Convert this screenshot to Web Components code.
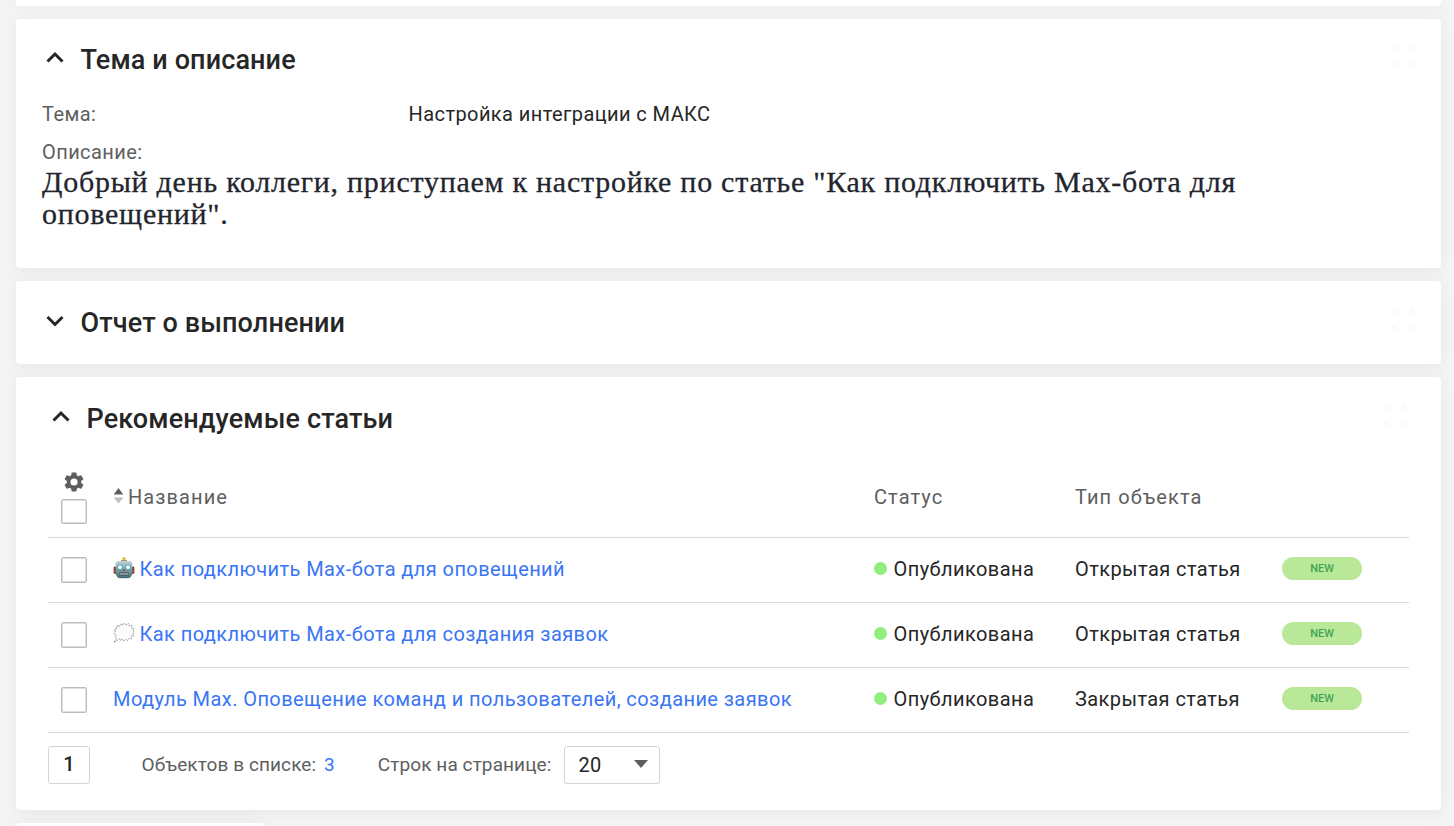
<!DOCTYPE html>
<html lang="ru">
<head>
<meta charset="UTF-8">
<title>Рекомендуемые статьи</title>
<style>
    * { box-sizing: border-box; }
    html { height: 100%; overflow: hidden; }
    body {
        margin: 0;
        height: 826px;
        overflow: hidden;
        background: #f4f4f4;
        border-right: 1px solid #f8f8f8;
        color: #262626;
        font-family: Roboto, "Liberation Sans", sans-serif;
        font-size: 20px;
    }
    main {
        display: flex;
        flex-direction: column;
        gap: 13px;
        height: 826px;
        overflow: hidden;
        padding: 0 12px 0 16px;
    }
    .stub-top { height: 6px; border-radius: 0 0 4px 4px; }
    .stub-bottom { width: 249px; height: 40px; }
</style>
</head>
<body>
<main>
    <content-card class="stub-top"></content-card>

    <content-card style="height: 249px">
        <section-header open heading="Тема и описание"></section-header>
        <field-row label="Тема:">Настройка интеграции с МАКС</field-row>
        <text-field label="Описание:">Добрый день коллеги, приступаем к настройке по статье "Как подключить Max-бота для<br>оповещений".</text-field>
    </content-card>

    <content-card style="height: 83px">
        <section-header heading="Отчет о выполнении"></section-header>
    </content-card>

    <content-card style="height: 433px">
        <section-header open inset heading="Рекомендуемые статьи"></section-header>
        <article-table>
            <article-row icon="robot" name="Как подключить Max-бота для оповещений" status="Опубликована" type="Открытая статья"></article-row>
            <article-row icon="bubble" name="Как подключить Max-бота для создания заявок" status="Опубликована" type="Открытая статья"></article-row>
            <article-row name="Модуль Max. Оповещение команд и пользователей, создание заявок" status="Опубликована" type="Закрытая статья"></article-row>
        </article-table>
        <list-pager page="1" total="3" size="20"></list-pager>
    </content-card>

    <content-card class="stub-bottom"></content-card>
</main>

<script>
const icons = {
    robot: `
        <svg width="22" height="22" viewBox="0 0 22 22">
            <defs>
                <linearGradient id="face" x1="0" y1="0" x2="0" y2="1">
                    <stop offset="0" stop-color="#c3d3d6"/>
                    <stop offset=".5" stop-color="#7d9fa5"/>
                    <stop offset="1" stop-color="#3f6a72"/>
                </linearGradient>
            </defs>
            <rect x=".6" y="9.5" width="3.4" height="7.5" rx="1.4" fill="#8f4640"/>
            <rect x="18" y="9.5" width="3.4" height="7.5" rx="1.4" fill="#8f4640"/>
            <path d="M8.2 3h5.6v2H8.2z" fill="#8a7d86"/>
            <circle cx="11" cy="1.9" r="1.8" fill="#efb43f"/>
            <path d="M2.8 7Q2.8 4 5.8 4h10.4q3 0 3 3v8.5q0 5.8-5 5.8H7.8q-5 0-5-5.8z" fill="url(#face)"/>
            <circle cx="7" cy="10.2" r="2.8" fill="#4aa9bd"/>
            <circle cx="15" cy="10.2" r="2.8" fill="#4aa9bd"/>
            <circle cx="7" cy="10.2" r="1.9" fill="#f0ffff"/>
            <circle cx="15" cy="10.2" r="1.9" fill="#f0ffff"/>
            <path d="M11 11.4l1.4 2.6H9.6z" fill="#c8372e"/>
            <rect x="6.6" y="15.6" width="8.8" height="2.8" rx="1" fill="#3b4d50"/>
            <path d="M7.4 17h7.4" stroke="#d5e0e0" stroke-width="1.3" stroke-dasharray="1.3 .7"/>
        </svg>`,
    bubble: `
        <svg width="22" height="22" viewBox="0 0 22 22">
            <path d="M5.2 3.6l1.9.6L8.3 1.6l1.8 1.6L11.6 1l1.5 1.9 2.4-1.4.5 2.3 2.8-.5-.3 2.4 2.5.8-1.3 2 1.8 1.7-1.9 1.5 1.2 2.2-2.5.4.2 2.5-2.6-.4-1 2.2-2-1.3-1.9 1.8-1.5-1.9-2.3 1.1-.6-1.5-2.1 1.4L.8 20.6l2.9-4.4-1.8-1.6 1.3-1.7-2.4-1.2 1.8-1.7L1.1 8l2.4-.7L3 4.9z" fill="#fcfcfc" stroke="#8e8e8e" stroke-width=".9" stroke-dasharray="1.9 .9"/>
        </svg>`,
    gear: `
        <svg width="24" height="24" viewBox="0 0 24 24">
            <path fill="#5e5e5e" d="M19.14 12.94c.04-.3.06-.61.06-.94 0-.32-.02-.64-.07-.94l2.03-1.58a.49.49 0 0 0 .12-.61l-1.92-3.32a.488.488 0 0 0-.59-.22l-2.39.96c-.5-.38-1.03-.7-1.62-.94l-.36-2.54a.484.484 0 0 0-.48-.41h-3.84c-.24 0-.43.17-.47.41l-.36 2.54c-.59.24-1.13.57-1.62.94l-2.39-.96c-.22-.08-.47 0-.59.22L2.74 8.87c-.12.21-.08.47.12.61l2.03 1.58c-.05.3-.09.63-.09.94s.02.64.07.94l-2.03 1.58a.49.49 0 0 0-.12.61l1.92 3.32c.12.22.37.29.59.22l2.39-.96c.5.38 1.03.7 1.62.94l.36 2.54c.05.24.24.41.48.41h3.84c.24 0 .44-.17.47-.41l.36-2.54c.59-.24 1.13-.56 1.62-.94l2.39.96c.22.08.47 0 .59-.22l1.92-3.32c.12-.22.07-.47-.12-.61zM12 15.6A3.6 3.6 0 1 1 12 8.4a3.6 3.6 0 0 1 0 7.2z"/>
        </svg>`
};

// columns shared by the table head and its rows
const columns = `
    display: grid;
    grid-template-columns: 65px 761px 201px 206px 1fr;
    align-items: center;
`;

class ContentCard extends HTMLElement {
    constructor() {
        super();
        this.attachShadow({ mode: 'open' });
        this.shadowRoot.innerHTML = `
            <style>
                :host {
                    display: block;
                    box-sizing: border-box;
                    flex: none;
                    background: #fff;
                    border-radius: 4px;
                    box-shadow: 0 3px 16px rgba(0,0,0,0.06);
                }
            </style>
            <slot></slot>
        `;
    }
}

class SectionHeader extends HTMLElement {
    constructor() {
        super();
        this.attachShadow({ mode: 'open' });
    }

    connectedCallback() {
        const chevron = this.hasAttribute('open') ? 'M1.5 10.5 9 3l7.5 7.5' : 'M1.5 3 9 10.5 16.5 3';
        this.shadowRoot.innerHTML = `
            <style>
                :host {
                    display: flex;
                    align-items: center;
                    height: 82px;
                    padding: 0 26px 0 30px;
                }
                :host(:not([open])) { height: 84px; }
                :host([inset]) { padding: 0 34px 0 36px; height: 84px; }
                h2 {
                    flex: 1;
                    margin: 0 0 0 16.5px;
                    font-size: 27px;
                    font-weight: 500;
                    line-height: 32px;
                    letter-spacing: 0.12px;
                    white-space: nowrap;
                }
                .chevron { margin-bottom: 4px; }
                .expand { margin-bottom: 8px; }
            </style>
            <svg class="chevron" width="18" height="14" viewBox="0 0 18 14" fill="none" stroke="#262626" stroke-width="3">
                <path d="${chevron}"/>
            </svg>
            <h2>${this.getAttribute('heading')}</h2>
            <svg class="expand" width="24" height="24" viewBox="0 0 24 24" fill="none" stroke="#fbfbfb" stroke-width="2.4">
                <path d="M2 8V2h6M2 2l7 7M16 2h6v6M22 2l-7 7M2 16v6h6M2 22l7-7M22 16v6h-6M22 22l-7-7"/>
            </svg>
        `;
    }
}

class FieldRow extends HTMLElement {
    constructor() {
        super();
        this.attachShadow({ mode: 'open' });
    }

    connectedCallback() {
        this.shadowRoot.innerHTML = `
            <style>
                :host {
                    display: grid;
                    grid-template-columns: 366.5px 1fr;
                    padding: 0 26px;
                    height: 38px;
                    line-height: 26px;
                    letter-spacing: 0.42px;
                }
                .label { color: #5e5e5e; }
            </style>
            <span class="label">${this.getAttribute('label')}</span>
            <span><slot></slot></span>
        `;
    }
}

class TextField extends HTMLElement {
    constructor() {
        super();
        this.attachShadow({ mode: 'open' });
    }

    connectedCallback() {
        this.shadowRoot.innerHTML = `
            <style>
                :host { display: block; padding: 0 26px; white-space: nowrap; }
                .label { color: #5e5e5e; line-height: 26px; letter-spacing: 0.42px; }
                .text {
                    margin-top: 1px;
                    color: #22252e;
                    font: 30px/32px Georgia, "Liberation Serif", serif;
                    letter-spacing: 0.74px;
                    -webkit-text-stroke: 0.3px #22252e;
                }
            </style>
            <div class="label">${this.getAttribute('label')}</div>
            <div class="text"><slot></slot></div>
        `;
    }
}

class CheckBox extends HTMLElement {
    constructor() {
        super();
        this.attachShadow({ mode: 'open' });
        this.shadowRoot.innerHTML = `
            <style>
                :host {
                    display: block;
                    box-sizing: border-box;
                    width: 26px;
                    height: 26px;
                    border: 1px solid #bdbdbd;
                    border-radius: 2px;
                    background: #fff;
                    box-shadow: inset 0 0 0 1px #dedede;
                }
            </style>
        `;
    }
}

class ArticleTable extends HTMLElement {
    constructor() {
        super();
        this.attachShadow({ mode: 'open' });
        this.shadowRoot.innerHTML = `
            <style>
                :host { display: block; margin: 0 32px; }
                :host { margin-top: -1px; }
                .head {
                    ${columns}
                    box-sizing: border-box;
                    height: 78px;
                    border-bottom: 1px solid #d9d9d9;
                    color: #5e5e5e;
                    letter-spacing: 1.08px;
                }
                .tools { display: flex; flex-direction: column; align-items: center; width: 52px; padding-bottom: 4px; }
                .tools check-box { margin-top: 5px; height: 25px; }
                .name { display: flex; align-items: center; gap: 4px; }
                .name svg { margin-bottom: 2px; }
                .head > span { padding-bottom: 4px; }
            </style>
            <div class="head">
                <div class="tools">${icons.gear}<check-box></check-box></div>
                <span class="name">
                    <svg width="11" height="16" viewBox="0 0 11 16">
                        <path d="M5.5 0 10.3 6.5H.7z" fill="#5e5e5e"/>
                        <path d="M5.5 15.5 10.3 9.5H.7z" fill="#bdbdbd"/>
                    </svg>
                    Название
                </span>
                <span>Статус</span>
                <span>Тип объекта</span>
            </div>
            <slot></slot>
        `;
    }
}

class ArticleRow extends HTMLElement {
    constructor() {
        super();
        this.attachShadow({ mode: 'open' });
    }

    connectedCallback() {
        const icon = icons[this.getAttribute('icon')] || '';
        this.shadowRoot.innerHTML = `
            <style>
                :host {
                    ${columns}
                    box-sizing: border-box;
                    height: 65px;
                    border-bottom: 1px solid #d9d9d9;
                    letter-spacing: 0.42px;
                    white-space: nowrap;
                }
                check-box { margin-left: 13px; }
                a { display: flex; align-items: center; gap: 4.5px; color: #3975f5; padding-bottom: 2px; }
                a svg { margin-bottom: 2px; }
                .status { display: flex; align-items: center; gap: 6.5px; padding-bottom: 2px; }
                .status::before {
                    content: '';
                    width: 13px;
                    height: 13px;
                    margin-bottom: 1px;
                    border-radius: 50%;
                    background: #90ee7e;
                }
                .type { padding-bottom: 2px; }
                .tag {
                    width: 80px;
                    height: 23px;
                    margin: 0 0 3px 1px;
                    border-radius: 12px;
                    background: #b9e998;
                    color: #43a355;
                    font-size: 11px;
                    font-weight: 500;
                    line-height: 23px;
                    letter-spacing: 0;
                    text-align: center;
                }
            </style>
            <check-box></check-box>
            <a>${icon}<span>${this.getAttribute('name')}</span></a>
            <span class="status">${this.getAttribute('status')}</span>
            <span class="type">${this.getAttribute('type')}</span>
            <span class="tag">NEW</span>
        `;
    }
}

class ListPager extends HTMLElement {
    constructor() {
        super();
        this.attachShadow({ mode: 'open' });
    }

    connectedCallback() {
        this.shadowRoot.innerHTML = `
            <style>
                :host {
                    display: flex;
                    align-items: center;
                    margin: 13px 32px 0;
                    color: #5e5e5e;
                    font-size: 19px;
                    letter-spacing: 0.09px;
                    white-space: nowrap;
                }
                .page, .size {
                    display: flex;
                    align-items: center;
                    box-sizing: border-box;
                    height: 38px;
                    border: 1px solid #d4d4d4;
                    border-radius: 3px;
                    color: #262626;
                    font-size: 20px;
                }
                .page { justify-content: center; width: 42px; padding-bottom: 2px; font-weight: 500; }
                .size { justify-content: space-between; width: 96px; padding: 0 11px 0 13px; margin-left: 13px; letter-spacing: 0.4px; }
                .size svg { margin-bottom: 2px; }
                .total, .rows { padding-bottom: 2px; }
                .total { margin-left: 51.5px; }
                .total b { margin-left: 3px; color: #3975f5; font-weight: 400; }
                .rows { margin-left: 43px; }
            </style>
            <span class="page">${this.getAttribute('page')}</span>
            <span class="total">Объектов в списке: <b>${this.getAttribute('total')}</b></span>
            <span class="rows">Строк на странице:</span>
            <span class="size">
                ${this.getAttribute('size')}
                <svg width="14" height="8" viewBox="0 0 14 8"><path d="M0 0h14L7 8z" fill="#5e5e5e"/></svg>
            </span>
        `;
    }
}

customElements.define('content-card', ContentCard);
customElements.define('section-header', SectionHeader);
customElements.define('field-row', FieldRow);
customElements.define('text-field', TextField);
customElements.define('check-box', CheckBox);
customElements.define('article-table', ArticleTable);
customElements.define('article-row', ArticleRow);
customElements.define('list-pager', ListPager);
</script>
</body>
</html>
